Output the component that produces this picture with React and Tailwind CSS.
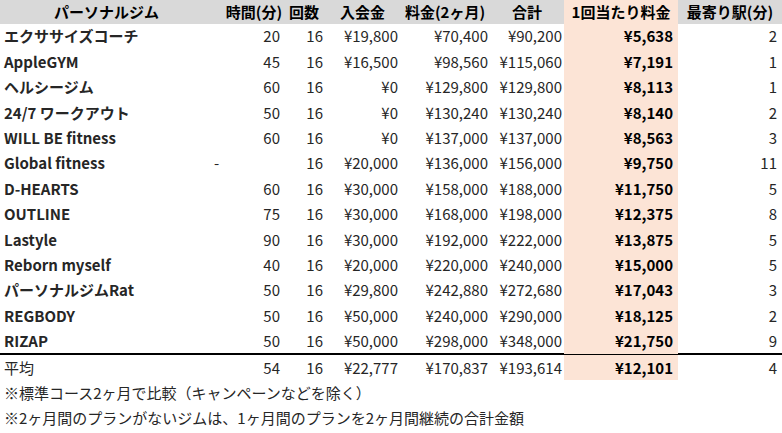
const rows = [
  ["エクササイズコーチ", "20", "16", "¥19,800", "¥70,400", "¥90,200", "¥5,638", "2"],
  ["AppleGYM", "45", "16", "¥16,500", "¥98,560", "¥115,060", "¥7,191", "1"],
  ["ヘルシージム", "60", "16", "¥0", "¥129,800", "¥129,800", "¥8,113", "1"],
  ["24/7 ワークアウト", "50", "16", "¥0", "¥130,240", "¥130,240", "¥8,140", "2"],
  ["WILL BE fitness", "60", "16", "¥0", "¥137,000", "¥137,000", "¥8,563", "3"],
  ["Global fitness", "-", "16", "¥20,000", "¥136,000", "¥156,000", "¥9,750", "11"],
  ["D-HEARTS", "60", "16", "¥30,000", "¥158,000", "¥188,000", "¥11,750", "5"],
  ["OUTLINE", "75", "16", "¥30,000", "¥168,000", "¥198,000", "¥12,375", "8"],
  ["Lastyle", "90", "16", "¥30,000", "¥192,000", "¥222,000", "¥13,875", "5"],
  ["Reborn myself", "40", "16", "¥20,000", "¥220,000", "¥240,000", "¥15,000", "5"],
  ["パーソナルジムRat", "50", "16", "¥29,800", "¥242,880", "¥272,680", "¥17,043", "3"],
  ["REGBODY", "50", "16", "¥50,000", "¥240,000", "¥290,000", "¥18,125", "2"],
  ["RIZAP", "50", "16", "¥50,000", "¥298,000", "¥348,000", "¥21,750", "9"],
];

const cols = "grid grid-cols-[213px_70px_42px_75px_90px_74px_114px_104px]";

function Row({ r, avg }) {
  return (
    <div className={`${cols} h-[25.4px] items-stretch`}>
      <div className={`flex items-center pl-1 ${avg ? "font-normal" : "font-bold"}`}>{r[0]}</div>
      <div className={`flex items-center pr-[3px] ${r[1] === "-" ? "justify-start pl-[1px]" : "justify-end"}`}>{r[1]}</div>
      <div className="flex items-center justify-end pr-[2px]">{r[2]}</div>
      <div className="flex items-center justify-end pr-[2px]">{r[3]}</div>
      <div className="flex items-center justify-end pr-[2px]">{r[4]}</div>
      <div className="flex items-center justify-end pr-[2px]">{r[5]}</div>
      <div className="flex items-center justify-end pr-[5px] bg-[#fce4d6] font-bold text-black">{r[6]}</div>
      <div className="flex items-center justify-end pr-[5px]">{r[7]}</div>
    </div>
  );
}

export default function App() {
  return (
    <div
      className="w-[782px] h-[433px] bg-white text-[15px] text-[#262626] overflow-hidden"
      style={{ fontFamily: '"Noto Sans CJK JP", "Noto Sans", sans-serif' }}
    >
      <div className={`${cols} h-[24px] bg-[#d9d9d9] font-bold text-black`}>
        <div className="flex items-center justify-center">パーソナルジム</div>
        <div className="flex items-center justify-center pl-3">時間(分)</div>
        <div className="flex items-center justify-center">回数</div>
        <div className="flex items-center justify-center">入会金</div>
        <div className="flex items-center justify-center">料金(2ヶ月)</div>
        <div className="flex items-center justify-center">合計</div>
        <div className="flex items-center justify-center bg-[#fce4d6]">1回当たり料金</div>
        <div className="flex items-center justify-center">最寄り駅(分)</div>
      </div>
      {rows.map((r) => (
        <Row key={r[0]} r={r} />
      ))}
      <div className="h-[2px] bg-black -mt-[1px]" />
      <Row r={["平均", "54", "16", "¥22,777", "¥170,837", "¥193,614", "¥12,101", "4"]} avg />
      <div className="h-[25px] flex items-center pl-1">※標準コース2ヶ月で比較（キャンペーンなどを除く）</div>
      <div className="h-[25px] flex items-center pl-1">※2ヶ月間のプランがないジムは、1ヶ月間のプランを2ヶ月間継続の合計金額</div>
    </div>
  );
}
